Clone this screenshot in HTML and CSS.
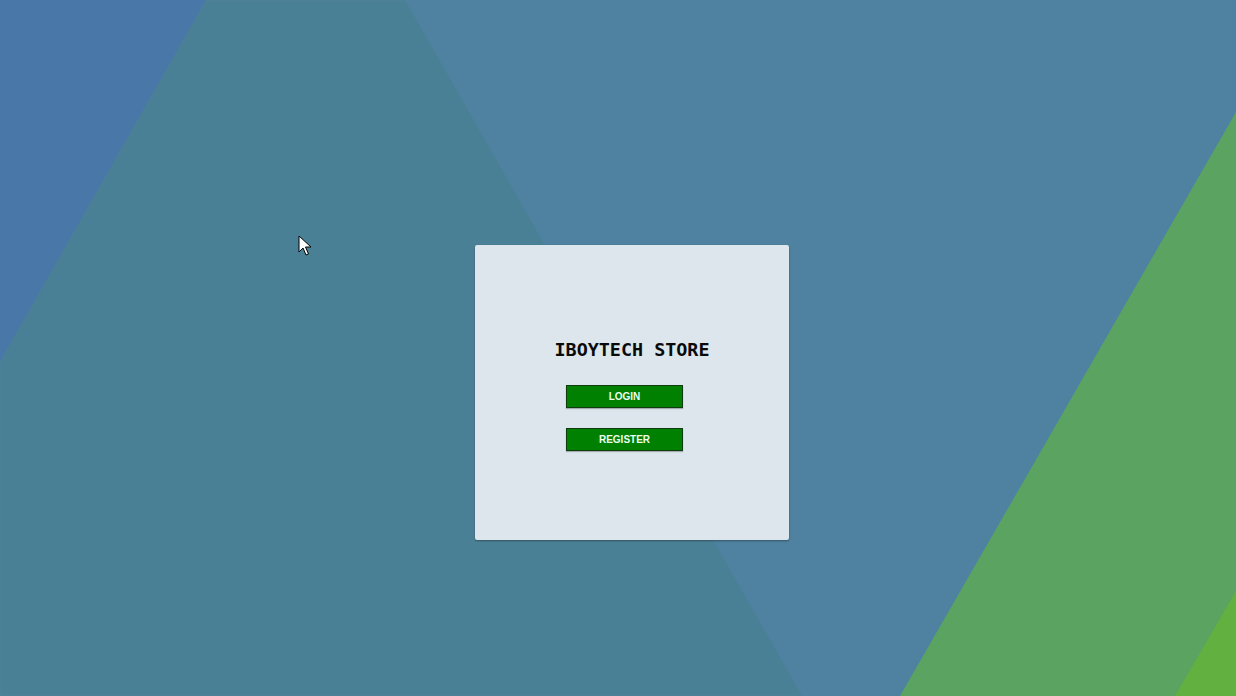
FILE: index.html
```html
<!DOCTYPE html>
<html>
<head>
<meta charset="utf-8">
<link rel="stylesheet" href="styles.css">
</head>
<body>
<div class="bg" aria-hidden="true">
  <div class="shape shape-blue"></div>
  <div class="shape shape-teal"></div>
  <div class="shape shape-green"></div>
  <div class="shape shape-lime"></div>
</div>
<main class="page">
  <section class="card">
    <h3 class="title">IBOYTECH STORE</h3>
    <div class="actions">
      <button class="btn">LOGIN</button>
      <button class="btn">REGISTER</button>
    </div>
  </section>
</main>
<svg class="cursor" width="14" height="22" viewBox="0 0 14 22" aria-hidden="true">
  <path d="M1 1 L1 17 L5 13 L8 20 L10.5 19 L7.5 12 L13 12 Z" fill="#fff" stroke="#000" stroke-width="1" stroke-linejoin="miter"/>
</svg>
</body>
</html>
```
FILE: styles.css
```css
html, body {
  margin: 0;
  padding: 0;
  width: 1236px;
  height: 696px;
  overflow: hidden;
}
body {
  background: #4f82a0;
  position: relative;
  font-family: "Liberation Sans", Arial, sans-serif;
}
.bg {
  position: absolute;
  inset: 0;
  overflow: hidden;
}
.shape {
  position: absolute;
  inset: 0;
}
.shape-blue {
  background: #4977a8;
  clip-path: polygon(0 0, 206px 0, 0 362px);
}
.shape-teal {
  background: #4a8095;
  clip-path: polygon(206px 0, 405px 0, 802px 696px, 0 696px, 0 362px);
  filter: blur(1.5px);
}
.shape-green {
  background: #5ba360;
  clip-path: polygon(1236px 112px, 1236px 696px, 900px 696px);
}
.shape-lime {
  background: #62b03f;
  clip-path: polygon(1236px 591px, 1236px 696px, 1175px 696px);
}
.page {
  position: relative;
  padding: 245px 0 0 475px;
}
.card {
  width: 314px;
  height: 295px;
  box-sizing: border-box;
  background: #dce6ec;
  border-radius: 2px;
  box-shadow: 0 1px 2px rgba(0, 0, 0, 0.35);
  display: flex;
  flex-direction: column;
  align-items: center;
  padding-top: 94px;
}
.title {
  margin: 0;
  font-family: "DejaVu Sans Mono", monospace;
  font-size: 18.4px;
  font-weight: bold;
  color: #0a0a0a;
  line-height: 22px;
  -webkit-text-stroke: 0;
}
.actions {
  display: flex;
  flex-direction: column;
  gap: 20px;
  margin-top: 24px;
  margin-right: 15px;
}
.btn {
  width: 117px;
  height: 23px;
  padding: 0;
  background: #008000;
  border: 1px solid #0f3d0f;
  color: #ecffec;
  font-family: "Liberation Sans", Arial, sans-serif;
  font-size: 10px;
  font-weight: bold;
  line-height: 21px;
  text-align: center;
  box-shadow: 0 1px 1px rgba(0, 0, 0, 0.25);
}
.cursor {
  position: absolute;
  left: 298px;
  top: 235px;
}
```
